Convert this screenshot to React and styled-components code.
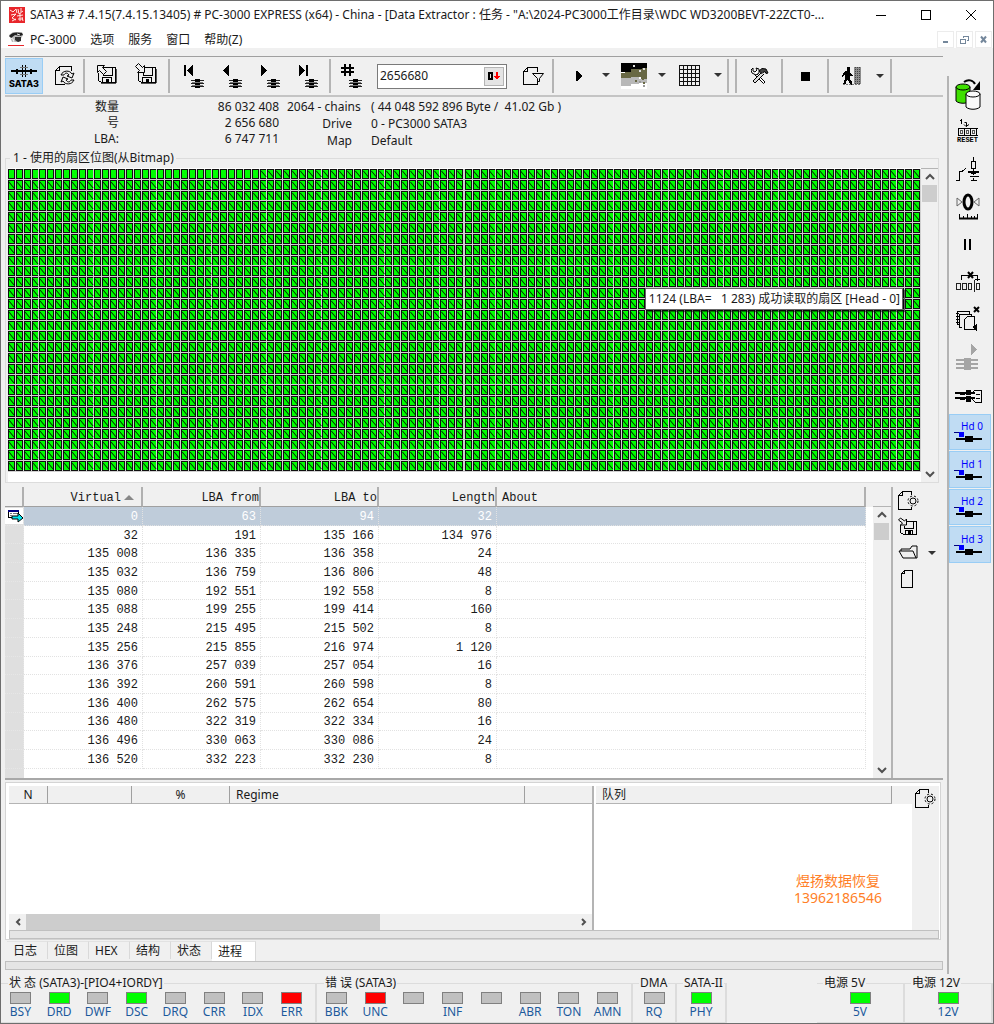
import React, { useState } from "react";
import styled, { createGlobalStyle, css } from "styled-components";

const GlobalStyle = createGlobalStyle`
  * {
    box-sizing: border-box;
  }
  body {
    margin: 0;
    background: #f0f0f0;
    color: #1a1a1a;
    font-family: "Noto Sans", "Noto Sans CJK SC", sans-serif;
    font-size: 12px;
    line-height: 16px;
  }
  button, input {
    font: inherit;
    color: inherit;
  }
`;

/* ---------- data ---------- */

const rows = [
  ["0", "63", "94", "32"],
  ["32", "191", "135 166", "134 976"],
  ["135 008", "136 335", "136 358", "24"],
  ["135 032", "136 759", "136 806", "48"],
  ["135 080", "192 551", "192 558", "8"],
  ["135 088", "199 255", "199 414", "160"],
  ["135 248", "215 495", "215 502", "8"],
  ["135 256", "215 855", "216 974", "1 120"],
  ["136 376", "257 039", "257 054", "16"],
  ["136 392", "260 591", "260 598", "8"],
  ["136 400", "262 575", "262 654", "80"],
  ["136 480", "322 319", "322 334", "16"],
  ["136 496", "330 063", "330 086", "24"],
  ["136 520", "332 223", "332 230", "8"],
];

const statusLeds = [
  ["BSY", "off"],
  ["DRD", "on"],
  ["DWF", "off"],
  ["DSC", "on"],
  ["DRQ", "off"],
  ["CRR", "off"],
  ["IDX", "off"],
  ["ERR", "error"],
];

const errorLeds = [
  ["BBK", "off"],
  ["UNC", "error"],
  ["", "off"],
  ["INF", "off"],
  ["", "off"],
  ["ABR", "off"],
  ["TON", "off"],
  ["AMN", "off"],
];

const tabs = ["日志", "位图", "HEX", "结构", "状态", "进程"];

const ledColors = { off: "#c0c0c0", on: "#00ff00", error: "#ff0000" };

/* ---------- icons ---------- */

const Svg = styled.svg`
  display: block;
  flex: none;
  fill: none;
  stroke: #000;
  stroke-width: 1;
`;

const Icon = ({ w = 32, h = 32, crisp = true, children }) => (
  <Svg
    width={w}
    height={h}
    viewBox={`0 0 ${w} ${h}`}
    shapeRendering={crisp ? "crispEdges" : "auto"}
    aria-hidden="true"
  >
    {children}
  </Svg>
);

const AppLogo = () => (
  <Icon w={16} h={16} crisp={false}>
    <rect width="16" height="16" fill="#e8262b" stroke="none" />
    <path
      d="M1 3l3 2 3-3 1 4M9 2l1 5 4-3M12 1v4M2 8l5-1-4 4 4 2M8 9l6-1M11 6v8M9 12l5 0M3 14l4-2M13 10l1 4"
      stroke="#ffe9e4"
    />
  </Icon>
);

const DocLogo = () => (
  <Icon w={16} h={16} crisp={false}>
    <path d="M1 4l4-3h9l1 3-4 7H4z" fill="#b9b9b9" stroke="none" />
    <path d="M1 5c3-4 7-4 13-3l1 2-3 1-5-1-4 3z" fill="#222" stroke="none" />
    <path d="M7 6l6 0 0 4-3 1-3-2z" fill="#2e2e2e" stroke="none" />
    <path d="M2 7l3 1 1 3M9 3l3 1" stroke="#eee" />
    <path d="M0 14.500h16" stroke="#e8262b" />
  </Icon>
);

const Connector = () => (
  <Icon w={28} h={14}>
    <path d="M1 7h26" strokeWidth="2" />
    <path d="M6 5h2v5H6zM20 5h2v5h-2z" fill="#000" stroke="none" />
    <path d="M12.500 1v12M15.500 1v12" />
    <path d="M10 3.500h8M10 10.500h8" stroke="#777" />
  </Icon>
);

const PaperRefresh = () => (
  <Icon>
    <path d="M24.500 11V6.500h-12l-4 4v14h9M8.500 10.500h4v-4" />
    <g shapeRendering="auto">
      <path d="M14 15c2-5 9-5 11-1l2-1-2 5-5-2 2-1c-2-3-4-2-5 0z" fill="#f0f0f0" />
      <path d="M27 20c-2 5-9 5-11 1l-2 1 2-5 5 2-2 1c2 3 4 2 5 0z" fill="#f0f0f0" />
    </g>
  </Icon>
);

const floppy = (
  <>
    <path d="M12 7.500h13.500v15H11.500l-3-2v-8" />
    <path d="M13.500 8v7.500h9V8M12.500 22v-4.500h9V22" />
    <path d="M16 19h3v4h-3z" fill="#000" stroke="none" />
    <path d="M10.500 23.500h15M26.500 9v14" stroke="#555" />
  </>
);

const LoadMap = () => (
  <Icon>
    {floppy}
    <path d="M7.500 12.500v-7h7l-2 2 4 4-3 3-4-4z" fill="#f0f0f0" shapeRendering="auto" />
  </Icon>
);

const SaveMap = () => (
  <Icon>
    {floppy}
    <path d="M14.500 5.500v7h-7l2-2-4-4 3-3 4 4z" fill="#f0f0f0" shapeRendering="auto" />
  </Icon>
);

const chain = (
  <>
    <path d="M14 21.500h13M14 24.500h13M14 27.500h13" stroke="#222" />
    <path d="M18 20h5v9h-5z" fill="#000" stroke="none" />
    <path d="M15 23.500h11M15 26.500h11" stroke="#777" />
  </>
);

const navArrows = {
  first: (
    <>
      <path d="M7 6h2v11H7z" fill="#000" stroke="none" />
      <path d="M16 6v11l-6-5v-1z" fill="#000" stroke="none" />
    </>
  ),
  prev: <path d="M14 6v11l-6-5v-1z" fill="#000" stroke="none" />,
  next: <path d="M8 6v11l6-5v-1z" fill="#000" stroke="none" />,
  last: (
    <>
      <path d="M8 6v11l6-5v-1z" fill="#000" stroke="none" />
      <path d="M15 6h2v11h-2z" fill="#000" stroke="none" />
    </>
  ),
  number: (
    <path d="M9 5h2v12H9zM14 5h2v12h-2zM6 8h13v2H6zM6 12h13v2H6z" fill="#000" stroke="none" />
  ),
};

const NavIcon = ({ kind }) => (
  <Icon h={34}>
    {navArrows[kind]}
    {chain}
  </Icon>
);

const PaperFilter = () => (
  <Icon>
    <path d="M22.500 12V7.500h-10l-4 4v13h14v-4M8.500 11.500h4v-4" />
    <path d="M17.500 13.500h11l-4 5v3h-2v-3z" fill="#f0f0f0" shapeRendering="auto" />
  </Icon>
);

const DownMark = () => (
  <Icon w={12} h={10}>
    <path d="M0 1h4l1 1v6L4 9H0zM2 3v4h1V3z" fill="#000" fillRule="evenodd" stroke="none" />
    <path d="M8 1h2v4h2L9 9 6 5h2z" fill="#ff0000" stroke="none" />
  </Icon>
);

const Play = () => (
  <Icon>
    <path d="M14 11h2v1h1v1h1v1h1v1h1v2h-1v1h-1v1h-1v1h-1v1h-2z" fill="#000" stroke="none" />
  </Icon>
);

const Caret = ({ color = "#333" }) => (
  <Icon w={8} h={5}>
    <path d="M0 0h8L4 4z" fill={color} stroke="none" shapeRendering="auto" />
  </Icon>
);

const Terrain = () => (
  <Icon w={26} h={26}>
    <path d="M0 0h26v26H0z" fill="#fff" stroke="none" />
    <path d="M0 0h26v9H0z" fill="#000" stroke="none" />
    <path d="M10 6h11V5h5v11h-6v-2h-9v1H0v-5h4V9h6z" fill="#686844" stroke="none" />
    <path d="M0 15h10v-1h8v2h8v4h-8v1h-8v2H0z" fill="#b8b8b8" stroke="none" />
    <path d="M12 3h2M22 6h2M18 8h2" stroke="#ddd" strokeWidth="2" />
    <path d="M14 18h2M21 16h2M22 20h2" stroke="#686844" strokeWidth="2" />
    <path d="M18 19h2M22 23h2" stroke="#999" strokeWidth="2" />
  </Icon>
);

const GridIcon = () => (
  <Icon w={22} h={22}>
    <path
      d="M.5 0v21M4.500 0v21M8.500 0v21M12.500 0v21M16.500 0v21M20.500 0v21M0 .5h21M0 4.500h21M0 8.500h21M0 12.500h21M0 16.500h21M0 20.500h21"
      stroke="#111"
    />
  </Icon>
);

const Tools = () => (
  <Icon w={18} h={18} crisp={false}>
    <path d="M5 6l9 9-1.500 1.500-9-9" fill="#fff" />
    <path d="M11 5L2 14l2 2 9-9" fill="#ddd" />
    <path d="M2 1v3l2 1 2-2-1-2 3 1v4L5 8 1 6 0 3z" fill="#fff" />
    <path d="M8 4l3-2.500 4 .5 2 4-2 .5-1-2-2 1-1 1z" fill="#444" />
  </Icon>
);

const Stop = () => (
  <Icon w={9} h={9}>
    <path d="M0 0h9v9H0z" fill="#000" stroke="none" />
  </Icon>
);

const Exit = () => (
  <Icon w={20} h={20}>
    <path d="M5 1h3v4H5z" fill="#000" stroke="none" />
    <path d="M4 5h4l1 3 2 1v1H8v3l2 3v3H8l-1-4-2-1-2 5H1l2-6V8l-2 3H0l1-4z" fill="#000" stroke="none" />
    <path d="M12 1h7v17h-7z" fill="#8c8c8c" stroke="none" />
    <path d="M13.500 1v17M15.500 1v17M17.500 1v17" stroke="#444" strokeDasharray="1 1" />
    <path d="M1 18.500h18" stroke="#777" strokeDasharray="2 1" />
  </Icon>
);

const CopyDisks = () => (
  <Icon crisp={false}>
    <path d="M4 9v14c3 3 11 3 14 0V9z" fill="#3fe000" />
    <ellipse cx="11" cy="9" rx="7" ry="3" fill="#3fe000" />
    <path d="M14 16v13c3 3 11 3 14 0V16z" fill="#fafafa" />
    <ellipse cx="21" cy="16" rx="7" ry="3" fill="#fafafa" />
    <path d="M12 4c4-3 9-2 11 2" strokeWidth="2" />
    <path d="M28 3v9h-7z" fill="#000" stroke="none" />
  </Icon>
);

const Reset = () => (
  <Icon h={17}>
    <path d="M9.500 0v5M8 1.500h2M12.500 3.500h2v4M12 5.500l2 2 3-2" shapeRendering="auto" />
    <path d="M5.500 9.500h20M5.500 16.500h20M6.500 9v8M12.500 9v8M18.500 9v8M24.500 9v8" />
    <path d="M8.500 11.500h2v3h-2zM14.500 11.500h2v3h-2zM20.500 11.500h2v3h-2z" stroke="#555" />
  </Icon>
);

const Relay = () => (
  <Icon>
    <path d="M4 27.500h3.500v-9H10l4-3" />
    <path d="M21.500 4v4M19.500 8.500h4v7h-4zM21.500 16v6M21.500 25v3" />
    <path d="M16 19h11M19 20h5" strokeWidth="2" />
    <path d="M17.500 23.500h9M18.500 27.500h6" />
  </Icon>
);

const Calibrate = () => (
  <Icon crisp={false}>
    <ellipse cx="16" cy="11" rx="4" ry="7" strokeWidth="3" />
    <path d="M5 7l5 4-5 4zM27 7l-5 4 5 4z" stroke="#666" />
    <path d="M7 27.500h19" strokeWidth="2" />
    <path d="M7.500 23v5M11.500 25v3M15.500 23v5M19.500 25v3M25.500 23v5M22.500 25v3" />
  </Icon>
);

const Pause = () => (
  <Icon w={10} h={12}>
    <path d="M1 1h2v11H1zM6 1h2v11H6z" fill="#000" stroke="none" />
  </Icon>
);

const SkipBlock = () => (
  <Icon>
    <path d="M9.500 14V9.500H25v5M23 13h5" />
    <path d="M16 6l5 6M21 6l-5 6" strokeWidth="2" shapeRendering="auto" />
    <path d="M4.500 17.500h4v6h-4zM10.500 17.500h4v6h-4zM16.500 17.500h3v6h-3zM22.500 14v12M24.500 17.500h3v6h-3z" stroke="#222" />
  </Icon>
);

const CloseCopies = () => (
  <Icon>
    <path d="M7.500 21h-2V8.500h12v2M9.500 24h-2V11.500h12v2M12.500 26.500v-10l3-3h7v13z" />
    <path d="M4 10.500h3M4 13.500h3M4 16.500h3M4 19.500h3" />
    <path d="M22 4l5 5M27 4l-5 5" strokeWidth="2" shapeRendering="auto" />
    <path d="M21 24l3-2v5z" fill="#000" />
  </Icon>
);

const RunChain = () => (
  <Icon>
    <path d="M19 3v11l6-5z" fill="#a5a5a5" stroke="none" />
    <path d="M4 19h22M4 23h22M4 27h22" stroke="#a5a5a5" strokeWidth="2" />
    <path d="M12 17h7v12h-7z" fill="#a5a5a5" stroke="none" />
  </Icon>
);

const Heads = () => (
  <Icon>
    <path d="M3 14h20M3 19h20" strokeWidth="2" />
    <path d="M8 13h5v3H8zM8 18h5v3H8zM14 11h5v12h-5z" fill="#000" stroke="none" />
    <path d="M14 16.500h6" stroke="#eee" />
    <path d="M20 14l3-3h6v12h-6l-3-3M24 15.500h4M24 19.500h4" />
  </Icon>
);

const HeadMark = () => (
  <Icon h={12}>
    <path d="M2 1.500h7" stroke="#000080" />
    <path d="M7 1h5v5H7z" fill="#0000ff" stroke="none" />
    <path d="M4 8h26" strokeWidth="2" />
    <path d="M13 5h8v6h-8z" fill="#000" stroke="none" />
  </Icon>
);

const PaperGear = () => (
  <Icon w={22} h={20}>
    <path d="M13.500 4V.5h-9l-4 4v14h13v-3M.5 4.500h4v-4" />
    <circle cx="15" cy="10" r="3" shapeRendering="auto" />
    <circle cx="15" cy="10" r="5" shapeRendering="auto" strokeDasharray="2 2" />
  </Icon>
);

const SmallSave = () => (
  <Icon w={22} h={20}>
    <path d="M7 4.500h11.500v13H5.500l-3-2V8M6.500 9v2.500h9V5M7.500 17v-4h7v4" />
    <path d="M10 14h3v4h-3z" fill="#000" stroke="none" />
    <path d="M8.500 2v6h-6l2-2-4-3 2-2 4 3z" fill="#f0f0f0" shapeRendering="auto" />
  </Icon>
);

const Folder = () => (
  <Icon w={22} h={16} crisp={false}>
    <path d="M3 6V4h9l2-3h5v12H5L1 6h14l3 7" />
  </Icon>
);

const Paper = () => (
  <Icon w={16} h={18}>
    <path d="M6.500.5h8v17h-11V3.500zM3.500 3.500h3v-3" />
  </Icon>
);

const RowMarker = () => (
  <Icon w={18} h={16}>
    <path d="M0 0h18v16H0z" fill="#fff" stroke="none" />
    <path d="M3.500 2.500h10v7h-10z" />
    <path d="M3 3h11" stroke="#000080" strokeWidth="2" />
    <path d="M5 5.500h2M8 5.500h5M5 7.500h2" stroke="#777" />
    <path d="M7 8h6V5l5 5-5 4v-3H7z" fill="#00e5ee" shapeRendering="auto" />
  </Icon>
);

const Chevron = ({ dir }) => {
  const d = {
    up: "M1 7l4-4 4 4",
    down: "M1 3l4 4 4-4",
    left: "M7 2L4 5l3 3",
    right: "M3 2l3 3-3 3",
  }[dir];
  return (
    <Icon w={10} h={10} crisp={false}>
      <path d={d} stroke="#505050" strokeWidth="2" />
    </Icon>
  );
};

/* ---------- window frame ---------- */

const Window = styled.div`
  display: flex;
  flex-direction: column;
  min-height: 100vh;
  border: 1px solid #6e6e6e;
  background: #f0f0f0;
`;

const TitleBar = styled.header`
  display: flex;
  align-items: center;
  height: 28px;
  padding-left: 8px;
  gap: 5px;
  background: #fff;
`;

const Title = styled.h1`
  flex: 1;
  min-width: 0;
  margin: 0;
  font-size: 12px;
  font-weight: 400;
  white-space: nowrap;
  overflow: hidden;
  text-overflow: ellipsis;
`;

const CaptionButton = styled.button`
  display: grid;
  place-items: center;
  width: 45px;
  height: 28px;
  padding: 0;
  border: 0;
  background: none;
`;

const MenuBar = styled.nav`
  display: flex;
  align-items: center;
  height: 19px;
  padding-left: 7px;
  background: #fff;
`;

const MenuItem = styled.button`
  height: 19px;
  margin-left: 6px;
  padding: 2px 8px 0 0;
  border: 0;
  background: none;
  line-height: 16px;
  white-space: nowrap;
`;

const ChildButtons = styled.div`
  display: flex;
  gap: 2px;
  margin-left: auto;
  padding-right: 1px;
  padding-top: 2px;
  align-self: stretch;
`;

const ChildButton = styled.button`
  display: grid;
  place-items: center;
  width: 17px;
  padding: 0;
  border: 1px solid #ececec;
  background: #fff;
`;

const Body = styled.div`
  display: flex;
  flex: 1;
`;

const Main = styled.main`
  display: flex;
  flex-direction: column;
  flex: 1;
  min-width: 0;
  padding: 8px 4px 5px;
`;

const SideBar = styled.aside`
  width: 46px;
  margin: 28px 0 1px;
  border-left: 2px solid #b4b4b4;
`;

const SideTools = styled.div`
  display: grid;
  grid-auto-rows: 1fr;
  height: 487px;
  gap: 1px;
`;

const SideButton = styled.button`
  display: flex;
  flex-direction: column;
  align-items: center;
  justify-content: center;
  width: 42px;
  min-height: 0;
  padding: 0 5px 0 0;
  border: 1px solid ${(p) => (p.$active ? "#99cdf5" : "transparent")};
  background: ${(p) => (p.$active ? "#c0dcf3" : "none")};
  color: #0000ff;
  font-size: 10px;
  line-height: 10px;
`;

const HeadLabel = styled.span`
  align-self: flex-end;
  padding-right: 2px;
`;

const TinyLabel = styled.span`
  color: #000;
  font: 700 7px/8px "Liberation Mono", monospace;
`;

/* ---------- toolbar ---------- */

const Toolbar = styled.div`
  display: flex;
  align-items: center;
  height: 41px;
  border-top: 1px solid #a0a0a0;
  border-bottom: 2px solid #c4c4c4;
`;

const ToolGroup = styled.div`
  display: flex;
  align-items: center;
  height: 34px;
  gap: ${(p) => p.$gap || 0}px;
  padding: 0 ${(p) => p.$end || 0}px 0 ${(p) => p.$start || 0}px;
  border-right: 2px solid #b4b4b4;
`;

const ToolButton = styled.button`
  display: flex;
  flex-direction: column;
  align-items: center;
  justify-content: center;
  width: 38px;
  height: 36px;
  padding: 0 2px 0 0;
  border: 1px solid transparent;
  background: none;
  ${(p) =>
    p.$active &&
    css`
      padding: 2px 0 0;
      border-color: #99cdf5;
      background: #c0dcf3;
    `}
`;

const PortLabel = styled.span`
  font: 800 9px/12px Inter, sans-serif;
  color: #000;
`;

const DropButton = styled.button`
  display: grid;
  place-items: center;
  width: 16px;
  height: 34px;
  padding: 0;
  border: 0;
  background: none;
`;

const Split = styled.div`
  display: flex;
`;

const NumberBox = styled.div`
  display: flex;
  align-items: center;
  width: 130px;
  height: 25px;
  padding-right: 2px;
  border: 1px solid #7a7a7a;
  background: #fff;
`;

const NumberInput = styled.input`
  flex: 1;
  min-width: 0;
  padding: 0 2px;
  border: 0;
  outline: 0;
  background: none;
`;

const NumberButton = styled.button`
  display: grid;
  place-items: center;
  width: 20px;
  height: 19px;
  padding: 0;
  border: 1px solid #b4b4b4;
  background: #e4e4e4;
`;

/* ---------- task info ---------- */

const Info = styled.section`
  display: flex;
  gap: 8px;
  height: 53px;
  padding-top: 2px;
`;

const Totals = styled.dl`
  display: grid;
  grid-template-columns: 114px 152px;
  grid-auto-rows: 16px;
  column-gap: 8px;
  margin: 0;
  text-align: right;

  dd {
    margin: 0;
  }
`;

const Details = styled.dl`
  display: grid;
  grid-template-columns: 76px auto;
  grid-auto-rows: 17px;
  column-gap: 8px;
  margin: 0;
  white-space: pre;

  dt {
    padding-right: 11px;
    text-align: right;
  }
  dt:first-child {
    padding-right: 0;
    text-align: left;
  }
  dd {
    margin: 0;
  }
`;

/* ---------- sector bitmap ---------- */

const GroupBox = styled.fieldset`
  min-width: 0;
  margin: 0 4px 4px 0;
  padding: 2px 0 0 2px;
  border: 1px solid #dcdcdc;

  legend {
    padding: 0 2px 0 3px;
    margin-left: 2px;
  }
`;

const MapPane = styled.div`
  display: flex;
`;

const MapCanvas = styled.div`
  position: relative;
  flex: 1;
  min-width: 0;
  padding: 1px 0 10px;
  background: #fff;
`;

const MapSvg = styled.svg`
  display: block;
  width: 100%;
  height: 303px;
`;

const Tooltip = styled.div`
  position: absolute;
  top: 120px;
  right: 18px;
  padding: 2px 2px 2px 3px;
  border: 1px solid #666;
  box-shadow: 2px 2px 1px rgba(0, 0, 0, 0.5);
  background: #fff;
  white-space: pre;
`;

const COLS = 116;
const LINES = 28;
const READ_FIRST = 32;
const MAP_W = 912;
const MAP_H = 303;

const edge = (n, count, size) => Math.round((n * size) / count);

// one sub-path per sector; the first ones of line 0 carry no stroke mark
const buildMap = () => {
  let frames = "";
  let fills = "";
  let marks = "";
  for (let y = 0; y < LINES; y++) {
    const top = edge(y, LINES, MAP_H);
    const h = edge(y + 1, LINES, MAP_H) - top - 1;
    for (let x = 0; x < COLS; x++) {
      const left = edge(x, COLS, MAP_W);
      const w = edge(x + 1, COLS, MAP_W) - left - 1;
      frames += `M${left} ${top}h${w}v${h}h-${w}z`;
      fills += `M${left + 1} ${top + 1}h5v8h-5z`;
      if (y > 0 || x >= READ_FIRST) {
        marks += `M${left + 1} ${top + 2}l5 6`;
      }
    }
  }
  return { frames, fills, marks };
};

const sectorPaths = buildMap();

const SectorMap = () => (
  <MapSvg viewBox={`0 0 ${MAP_W} ${MAP_H}`} preserveAspectRatio="none" role="img" aria-label="Sector map">
    <rect width={MAP_W} height={MAP_H} fill="#d0d0d0" />
    <path d={sectorPaths.frames} fill="#101010" shapeRendering="crispEdges" />
    <path d={sectorPaths.fills} fill="#00ff00" shapeRendering="crispEdges" />
    <path d={sectorPaths.marks} fill="none" stroke="#002800" />
  </MapSvg>
);

/* ---------- scroll bars ---------- */

const ScrollV = styled.div`
  display: flex;
  flex-direction: column;
  width: ${(p) => p.$width || 17}px;
  border-top: 1px solid #b4b4b4;
  background: #f0f0f0;
`;

const ScrollH = styled.div`
  display: flex;
  height: 16px;
  background: #f0f0f0;
`;

const ScrollArrow = styled.button`
  display: grid;
  place-items: center;
  width: 17px;
  height: 16px;
  padding: 0;
  border: 0;
  background: none;
`;

const ThumbV = styled.div`
  width: 15px;
  height: 17px;
  margin: 0 1px auto;
  background: #cdcdcd;
`;

const ThumbH = styled.div`
  width: 354px;
  margin-right: auto;
  background: #cdcdcd;
`;

/* ---------- chain table ---------- */

const ChainPane = styled.section`
  display: flex;
  border-bottom: 2px solid #a8a8a8;
`;

const TableWrap = styled.div`
  flex: 1;
  min-width: 0;
  background: #fff;
`;

const ChainTable = styled.table`
  width: 100%;
  height: 291px;
  border-collapse: separate;
  border-spacing: 0;
  table-layout: fixed;
  font: 12px/14px "Liberation Mono", monospace;

  th {
    height: 20px;
    padding: 3px 0 0;
    border-right: 2px solid #b0b0b0;
    border-bottom: 1px solid #a0a0a0;
    background: #f0f0f0;
    font-weight: 400;
    text-align: right;
    white-space: nowrap;
  }
  th:nth-child(2) {
    padding-right: 7px;
  }
  th:nth-child(6) {
    padding-left: 5px;
    text-align: left;
  }
  th:last-child {
    border: 0;
  }
  td {
    padding: 2px 4px 0 0;
    border-right: 1px dotted #e2e2e2;
    border-bottom: 1px dotted #e2e2e2;
    text-align: right;
  }
  td:first-child {
    padding: 0;
    border-color: #e6e6e6;
    background: #dfdfdf;
  }
  td:last-child {
    border: 0;
  }
`;

const Row = styled.tr`
  height: 18px;
  ${(p) =>
    p.$selected &&
    css`
      background: #bfccda;
      color: #fff;
      td:last-child {
        background: #fff;
      }
    `}
`;

const TailRow = styled.tr`
  td {
    height: 9px;
    padding: 0;
    border: 0;
  }
`;

const SortMark = styled.span`
  display: inline-block;
  margin-left: 3px;
  margin-bottom: 1px;
  border: 5px solid transparent;
  border-top: 0;
  border-bottom-color: #888;
`;

const ChainTools = styled.div`
  display: flex;
  flex-direction: column;
  width: 52px;
  padding: 4px 0 0 5px;
  gap: 6px;
  border-left: 2px solid #b4b4b4;
`;

const SmallButton = styled.button`
  display: flex;
  align-items: center;
  height: 20px;
  padding: 0;
  border: 0;
  background: none;
  cursor: pointer;
`;

const SmallSplit = styled.div`
  display: flex;
  align-items: center;
  gap: 8px;
`;

const TableScroll = styled.div`
  display: flex;
  padding-top: 19px;
`;

/* ---------- process pane ---------- */

const ProcessPane = styled.section`
  display: flex;
  flex-direction: column;
  flex: 1;
  margin: 2px 2px 0 0;
  padding: 3px 1px 0 3px;
  border: 1px solid #d4d4d4;
  background: #fff;
`;

const Lists = styled.div`
  display: flex;
  flex: 1;
`;

const ProcessList = styled.div`
  display: flex;
  flex-direction: column;
  flex: 1;
  min-width: 0;
  border-right: 2px solid #b4b4b4;
`;

const ListBody = styled.div`
  flex: 1;
`;

const HeadTable = styled.table`
  width: 100%;
  border-collapse: separate;
  border-spacing: 0;
  table-layout: fixed;

  th {
    height: 18px;
    padding: 1px 6px 0;
    border-right: 1px solid #a0a0a0;
    border-bottom: 1px solid #b4b4b4;
    background: #f0f0f0;
    font-weight: 400;
    line-height: 16px;
    text-align: ${(p) => p.$align || "center"};
  }
  th:nth-child(4) {
    text-align: left;
  }
  th:nth-child(5) {
    border-right: 0;
  }
`;

const QueuePane = styled.div`
  display: flex;
  width: 345px;
  padding-left: 2px;
`;

const Queue = styled.div`
  display: flex;
  flex-direction: column;
  width: 316px;
`;

const QueueHead = styled.div`
  padding-right: 20px;
  background: #f0f0f0;
`;

const QueueTools = styled.div`
  flex: 1;
  padding: 3px 0 0 3px;
  background: #f0f0f0;
`;

const Contact = styled.address`
  margin: auto 30px 24px auto;
  color: #ff7f27;
  font-size: 14px;
  font-style: normal;
  line-height: 17px;
  text-align: center;
`;

const Strip = styled.div`
  height: 9px;
  border: 1px solid #c0c0c0;
  background: #e5e5e5;
`;

const TabList = styled.div`
  display: flex;
  align-items: flex-start;
  height: 21px;
  padding: 1px 0 0 2px;
`;

const Tab = styled.button`
  min-width: ${(p) => (p.$active ? 44 : 41)}px;
  height: ${(p) => (p.$active ? 20 : 18)}px;
  padding: 0 6px;
  border: 0;
  border-right: 1px solid #d9d9d9;
  border-top: 1px solid #e2e2e2;
  background: ${(p) => (p.$active ? "#fff" : "#f0f0f0")};
  line-height: 16px;
  text-align: left;
`;

/* ---------- status bar ---------- */

const StatusBar = styled.footer`
  display: grid;
  grid-template-columns: 315fr 315fr 44px 50px 90px 88px 88px;
  height: 48px;
`;

const LedGroup = styled.fieldset`
  min-width: 0;
  margin: 0;
  padding: 0 ${(p) => (p.$wide ? 4 : 0)}px 0 0;
  border: 1px solid #dcdcdc;
  border-width: 1px 2px 1px 0;

  legend {
    margin-left: ${(p) => (p.$wide ? 7 : 6)}px;
    padding: 0 1px;
    white-space: nowrap;
  }
`;

const Leds = styled.div`
  display: flex;
  padding-top: 1px;
`;

const LedItem = styled.div`
  display: flex;
  flex: 1 0 0;
  flex-direction: column;
  align-items: center;
  min-width: 0;
  color: #1c5a9c;
`;

const Lamp = styled.span`
  width: 21px;
  height: 12px;
  border: 1px solid #808080;
  background: ${(p) => ledColors[p.$state]};
`;

const LedPanel = ({ title, items, wide }) => (
  <LedGroup $wide={wide}>
    <legend>{title}</legend>
    <Leds>
      {items.map(([name, state], i) => (
        <LedItem key={i}>
          <Lamp $state={state} />
          {name}
        </LedItem>
      ))}
    </Leds>
  </LedGroup>
);

const VScroll = ({ width }) => (
  <ScrollV $width={width}>
    <ScrollArrow aria-label="Scroll up">
      <Chevron dir="up" />
    </ScrollArrow>
    <ThumbV />
    <ScrollArrow aria-label="Scroll down">
      <Chevron dir="down" />
    </ScrollArrow>
  </ScrollV>
);

const sideTools = [
  ["Copy", <CopyDisks />],
  ["Reset", <><Reset /><TinyLabel>RESET</TinyLabel></>],
  ["Power", <Relay />],
  ["Recalibrate", <Calibrate />],
  ["Pause", <Pause />],
  ["Skip", <SkipBlock />],
  ["Close copies", <CloseCopies />],
  ["Run chain", <RunChain />],
  ["Heads", <Heads />],
];

const App = () => {
  const [sector, setSector] = useState("2656680");
  const [activeTab, setActiveTab] = useState("进程");
  const [heads, setHeads] = useState([true, true, true, true]);
  const [selected, setSelected] = useState(0);

  const toggleHead = (n) => {
    setHeads((prev) => prev.map((on, i) => (i === n ? !on : on)));
  };

  return (
    <Window>
      <GlobalStyle />
      <TitleBar>
        <AppLogo />
        <Title>
          SATA3 # 7.4.15(7.4.15.13405) # PC-3000 EXPRESS (x64) - China - [Data Extractor : 任务 -
          "A:\2024-PC3000工作目录\WDC WD3200BEVT-22ZCT0-...
        </Title>
        <Split>
          <CaptionButton aria-label="Minimize">
            <Icon w={10} h={10}><path d="M0 5.500h10" /></Icon>
          </CaptionButton>
          <CaptionButton aria-label="Maximize">
            <Icon w={10} h={10}><path d="M.5.5h9v9h-9z" /></Icon>
          </CaptionButton>
          <CaptionButton aria-label="Close">
            <Icon w={10} h={10} crisp={false}><path d="M0 0l10 10M10 0L0 10" /></Icon>
          </CaptionButton>
        </Split>
      </TitleBar>

      <MenuBar>
        <DocLogo />
        <MenuItem>PC-3000</MenuItem>
        <MenuItem>选项</MenuItem>
        <MenuItem>服务</MenuItem>
        <MenuItem>窗口</MenuItem>
        <MenuItem>帮助(Z)</MenuItem>
        <ChildButtons>
          <ChildButton aria-label="Minimize child">
            <Icon w={9} h={9}><path d="M2 7h5" stroke="#74879b" strokeWidth="2" /></Icon>
          </ChildButton>
          <ChildButton aria-label="Restore child">
            <Icon w={9} h={9}>
              <path d="M3.500 3V1.500h5v4H7M3 1.500h6M.5 4.500h5v4h-5zM0 4.500h6" stroke="#74879b" />
            </Icon>
          </ChildButton>
          <ChildButton aria-label="Close child">
            <Icon w={9} h={9} crisp={false}>
              <path d="M2 1.500l5 6M7 1.500l-5 6" stroke="#74879b" strokeWidth="2" />
            </Icon>
          </ChildButton>
        </ChildButtons>
      </MenuBar>

      <Body>
        <Main>
          <Toolbar>
            <ToolGroup $gap={2}>
              <ToolButton $active>
                <Connector />
                <PortLabel>SATA3</PortLabel>
              </ToolButton>
              <ToolButton aria-label="Refresh"><PaperRefresh /></ToolButton>
            </ToolGroup>
            <ToolGroup $gap={2} $start={3} $end={2}>
              <ToolButton aria-label="Load map"><LoadMap /></ToolButton>
              <ToolButton aria-label="Save map"><SaveMap /></ToolButton>
            </ToolGroup>
            <ToolGroup $start={5} $end={2}>
              {["first", "prev", "next", "last"].map((kind) => (
                <ToolButton key={kind} aria-label={kind}><NavIcon kind={kind} /></ToolButton>
              ))}
            </ToolGroup>
            <ToolGroup $gap={6} $start={2} $end={1}>
              <ToolButton aria-label="Go to number"><NavIcon kind="number" /></ToolButton>
              <NumberBox>
                <NumberInput
                  aria-label="Sector number"
                  value={sector}
                  onChange={(e) => setSector(e.target.value)}
                />
                <NumberButton aria-label="Decimal"><DownMark /></NumberButton>
              </NumberBox>
              <ToolButton aria-label="Filter"><PaperFilter /></ToolButton>
            </ToolGroup>
            <ToolGroup $gap={2} $start={6} $end={1}>
              <Split>
                <ToolButton aria-label="Start"><Play /></ToolButton>
                <DropButton aria-label="Start options"><Caret /></DropButton>
              </Split>
              <Split>
                <ToolButton aria-label="Map view"><Terrain /></ToolButton>
                <DropButton aria-label="Map view options"><Caret /></DropButton>
              </Split>
              <Split>
                <ToolButton aria-label="Grid"><GridIcon /></ToolButton>
                <DropButton aria-label="Grid options"><Caret /></DropButton>
              </Split>
            </ToolGroup>
            <ToolGroup $start={6} />
            <ToolGroup $start={5} $end={1}>
              <ToolButton aria-label="Tools"><Tools /></ToolButton>
            </ToolGroup>
            <ToolGroup $start={4} $end={2}>
              <ToolButton aria-label="Stop"><Stop /></ToolButton>
            </ToolGroup>
            <ToolGroup $start={5} $end={2}>
              <ToolButton aria-label="Exit"><Exit /></ToolButton>
              <DropButton aria-label="Exit options"><Caret /></DropButton>
            </ToolGroup>
          </Toolbar>

          <Info>
            <Totals>
              <dt>数量</dt>
              <dd>86 032 408</dd>
              <dt>号</dt>
              <dd>2 656 680</dd>
              <dt>LBA:</dt>
              <dd>6 747 711</dd>
            </Totals>
            <Details>
              <dt>2064 - chains</dt>
              <dd>{"( 44 048 592 896 Byte /  41.02 Gb )"}</dd>
              <dt>Drive</dt>
              <dd>0 - PC3000 SATA3</dd>
              <dt>Map</dt>
              <dd>Default</dd>
            </Details>
          </Info>

          <GroupBox>
            <legend>1 - 使用的扇区位图(从Bitmap)</legend>
            <MapPane>
              <MapCanvas>
                <SectorMap />
                <Tooltip role="tooltip">{"1124 (LBA=   1 283) 成功读取的扇区 [Head - 0]"}</Tooltip>
              </MapCanvas>
              <VScroll />
            </MapPane>
          </GroupBox>

          <ChainPane>
            <TableWrap>
              <ChainTable>
                <colgroup>
                  <col width="19" />
                  <col width="119" />
                  <col width="118" />
                  <col width="118" />
                  <col width="118" />
                  <col />
                  <col width="7" />
                </colgroup>
                <thead>
                  <tr>
                    <th />
                    <th>Virtual<SortMark /></th>
                    <th>LBA from</th>
                    <th>LBA to</th>
                    <th>Length</th>
                    <th>About</th>
                    <th />
                  </tr>
                </thead>
                <tbody>
                  {rows.map((row, i) => (
                    <Row key={row[0]} $selected={i === selected} onClick={() => setSelected(i)}>
                      <td>{i === selected && <RowMarker />}</td>
                      {row.map((cell, j) => (
                        <td key={j}>{cell}</td>
                      ))}
                      <td />
                      <td />
                    </Row>
                  ))}
                  <TailRow>
                    <td />
                    <td colSpan={6} />
                  </TailRow>
                </tbody>
              </ChainTable>
            </TableWrap>
            <TableScroll>
              <VScroll width={18} />
            </TableScroll>
            <ChainTools>
              <SmallButton aria-label="Settings"><PaperGear /></SmallButton>
              <SmallButton aria-label="Save"><SmallSave /></SmallButton>
              <SmallSplit>
                <SmallButton aria-label="Open"><Folder /></SmallButton>
                <SmallButton aria-label="Open options"><Caret /></SmallButton>
              </SmallSplit>
              <SmallButton aria-label="New"><Paper /></SmallButton>
            </ChainTools>
          </ChainPane>

          <ProcessPane>
            <Lists>
              <ProcessList>
                <HeadTable>
                  <colgroup>
                    <col width="39" />
                    <col width="84" />
                    <col width="98" />
                    <col />
                    <col width="67" />
                  </colgroup>
                  <thead>
                    <tr>
                      <th>N</th>
                      <th />
                      <th>%</th>
                      <th>Regime</th>
                      <th />
                    </tr>
                  </thead>
                </HeadTable>
                <ListBody />
                <ScrollH>
                  <ScrollArrow aria-label="Scroll left">
                    <Chevron dir="left" />
                  </ScrollArrow>
                  <ThumbH />
                  <ScrollArrow aria-label="Scroll right">
                    <Chevron dir="right" />
                  </ScrollArrow>
                </ScrollH>
              </ProcessList>
              <QueuePane>
                <Queue>
                  <QueueHead>
                    <HeadTable $align="left">
                      <thead>
                        <tr>
                          <th>队列</th>
                        </tr>
                      </thead>
                    </HeadTable>
                  </QueueHead>
                  <Contact>
                    煜扬数据恢复
                    <br />
                    13962186546
                  </Contact>
                </Queue>
                <QueueTools>
                  <SmallButton aria-label="Queue settings"><PaperGear /></SmallButton>
                </QueueTools>
              </QueuePane>
            </Lists>
            <Strip />
          </ProcessPane>

          <TabList role="tablist">
            {tabs.map((tab) => (
              <Tab
                key={tab}
                role="tab"
                aria-selected={tab === activeTab}
                $active={tab === activeTab}
                onClick={() => setActiveTab(tab)}
              >
                {tab}
              </Tab>
            ))}
          </TabList>
          <Strip />
        </Main>

        <SideBar>
          <SideTools>
            {sideTools.map(([name, icon]) => (
              <SideButton key={name} aria-label={name}>{icon}</SideButton>
            ))}
            {heads.map((on, i) => (
              <SideButton key={i} $active={on} onClick={() => toggleHead(i)}>
                <HeadLabel>Hd {i}</HeadLabel>
                <HeadMark />
              </SideButton>
            ))}
          </SideTools>
        </SideBar>
      </Body>

      <StatusBar>
        <LedPanel wide title="状 态 (SATA3)-[PIO4+IORDY]" items={statusLeds} />
        <LedPanel wide title="错 误 (SATA3)" items={errorLeds} />
        <LedPanel title="DMA" items={[["RQ", "off"]]} />
        <LedPanel title="SATA-II" items={[["PHY", "on"]]} />
        <div />
        <LedPanel title="电源 5V" items={[["5V", "on"]]} />
        <LedPanel title="电源 12V" items={[["12V", "on"]]} />
      </StatusBar>
    </Window>
  );
};

export default App;
